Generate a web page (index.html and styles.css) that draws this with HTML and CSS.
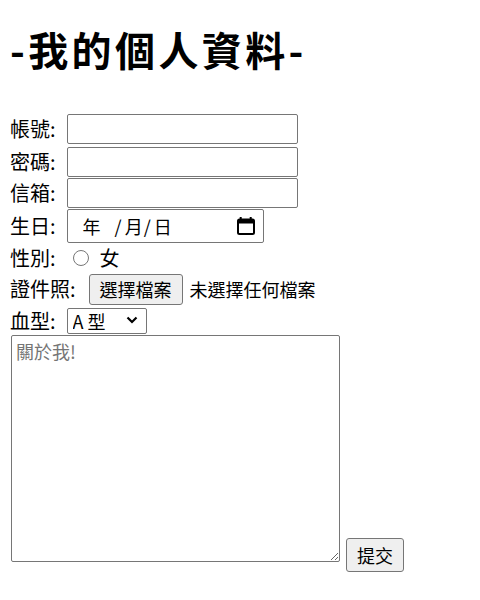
FILE: index.html
```html
<!DOCTYPE html>
<html lang="zh-Hant">
<head>
    <meta charset="UTF-8">
    <meta name="viewport" content="width=device-width, initial-scale=1.0">
    <title>我的個人資料</title>
    <link rel="stylesheet" href="styles.css">
</head>
<body>

    <h1 class="title">-我的個人資料-</h1>

    <form class="profile-form">
        <div class="row row-tall">
            <label for="account">帳號:</label>
            <input type="text" id="account" class="text-input">
        </div>
        <div class="row row-tall">
            <label for="password">密碼:</label>
            <input type="password" id="password" class="text-input">
        </div>
        <div class="row row-short">
            <label for="email">信箱:</label>
            <input type="email" id="email" class="text-input">
        </div>

        <!-- 生日: looks like the zh-TW date picker -->
        <div class="row row-date">
            <label>生日:</label>
            <div class="date-box">
                <span class="date-year">年</span>
                <span class="date-sep">/</span>
                <span>月</span>
                <span class="date-sep">/</span>
                <span>日</span>
                <svg class="date-icon" width="18" height="18" viewBox="0 0 18 18">
                    <rect x="2.7" y="0" width="2" height="3" fill="#000"/>
                    <rect x="12.7" y="0" width="2" height="3" fill="#000"/>
                    <rect x="1" y="2.5" width="16" height="14.5" rx="1.5" fill="none" stroke="#000" stroke-width="2"/>
                    <rect x="1" y="2.5" width="16" height="4" fill="#000"/>
                </svg>
            </div>
        </div>

        <div class="row row-radio">
            <label>性別:</label>
            <input type="radio" name="gender" id="female" class="radio">
            <label for="female" class="radio-text">女</label>
        </div>

        <div class="row row-file">
            <label>證件照:</label>
            <button type="button" class="file-btn">選擇檔案</button>
            <span class="file-name">未選擇任何檔案</span>
        </div>

        <div class="row row-select">
            <label for="blood">血型:</label>
            <span class="select-wrap">
                <select id="blood" class="blood-select">
                    <option>A 型</option>
                    <option>B 型</option>
                    <option>O 型</option>
                    <option>AB 型</option>
                </select>
                <svg class="select-arrow" width="12" height="8" viewBox="0 0 12 8">
                    <path d="M1.5 1.5 L6 6 L10.5 1.5" fill="none" stroke="#000" stroke-width="2.2"/>
                </svg>
            </span>
        </div>

        <div class="row-about">
            <textarea class="about" placeholder="關於我!"></textarea>
            <button type="submit" class="submit-btn">提交</button>
        </div>
    </form>

</body>
</html>
```

FILE: styles.css
```css
body {
    margin: 0;
    padding: 0 10px;
    font-family: "Noto Sans CJK TC", "Noto Sans", sans-serif;
    font-size: 20px;
    color: #000;
    background-color: #fff;
}

.title {
    font-size: 40px;
    font-weight: bold;
    line-height: 46px;
    letter-spacing: 3.4px;
    margin: 26px 0 40px;
}

.row {
    display: flex;
    align-items: center;
    gap: 12px;
}

.row label {
    line-height: 1;
}

.row-tall {
    height: 33px;
}

.row-short {
    height: 30px;
}

.row-date {
    height: 35px;
}

.row-radio {
    height: 29px;
}

.row-file {
    height: 34px;
}

.row-select {
    height: 29px;
}

.text-input {
    width: 231px;
    height: 30px;
    box-sizing: border-box;
    margin: 0 0 0 -1px;
    padding: 1px 3px;
    border: 1px solid #767676;
    border-radius: 2px;
    font-family: inherit;
    font-size: 18px;
}

.date-box {
    display: flex;
    align-items: center;
    width: 197px;
    height: 34px;
    box-sizing: border-box;
    margin-left: -1px;
    padding: 0 8px 0 15px;
    border: 1px solid #767676;
    border-radius: 2px;
    font-size: 18px;
    line-height: 1;
}

.date-year {
    width: 31px;
}

.date-sep {
    padding: 0 3px 0 1px;
}

.date-icon {
    margin-left: auto;
}

.radio {
    appearance: none;
    width: 16px;
    height: 16px;
    margin: 0 0 0 5px;
    border: 1.5px solid #767676;
    border-radius: 50%;
    background-color: #fff;
}

.row .radio-text {
    margin-left: -1px;
}

.file-btn {
    height: 31px;
    margin: 0 0 0 1px;
    padding: 0 10px;
    border: 1px solid #767676;
    border-radius: 3px;
    background-color: #efefef;
    font-family: inherit;
    font-size: 18px;
    color: #000;
}

.file-name {
    margin-left: -5px;
    font-size: 18px;
}

.select-wrap {
    position: relative;
    display: inline-block;
    margin-left: -1px;
}

.blood-select {
    appearance: none;
    width: 80px;
    height: 26px;
    box-sizing: border-box;
    margin: 0;
    padding: 0 0 0 5px;
    border: 1px solid #767676;
    border-radius: 2px;
    background-color: #fff;
    font-family: inherit;
    font-size: 18px;
    line-height: 1;
    color: #000;
}

.select-arrow {
    position: absolute;
    right: 9px;
    top: 10px;
    pointer-events: none;
}

.row-about {
    display: flex;
    align-items: flex-end;
    gap: 6px;
}

.about {
    width: 329px;
    height: 227px;
    box-sizing: border-box;
    margin: 0 0 10px 1px;
    padding: 2px 4px;
    border: 1px solid #767676;
    border-radius: 2px;
    font-family: inherit;
    font-size: 18px;
    resize: both;
}

.about::placeholder {
    color: #757575;
}

.submit-btn {
    height: 34px;
    padding: 0 10px;
    border: 1px solid #767676;
    border-radius: 3px;
    background-color: #efefef;
    font-family: inherit;
    font-size: 18px;
    color: #000;
}
```
